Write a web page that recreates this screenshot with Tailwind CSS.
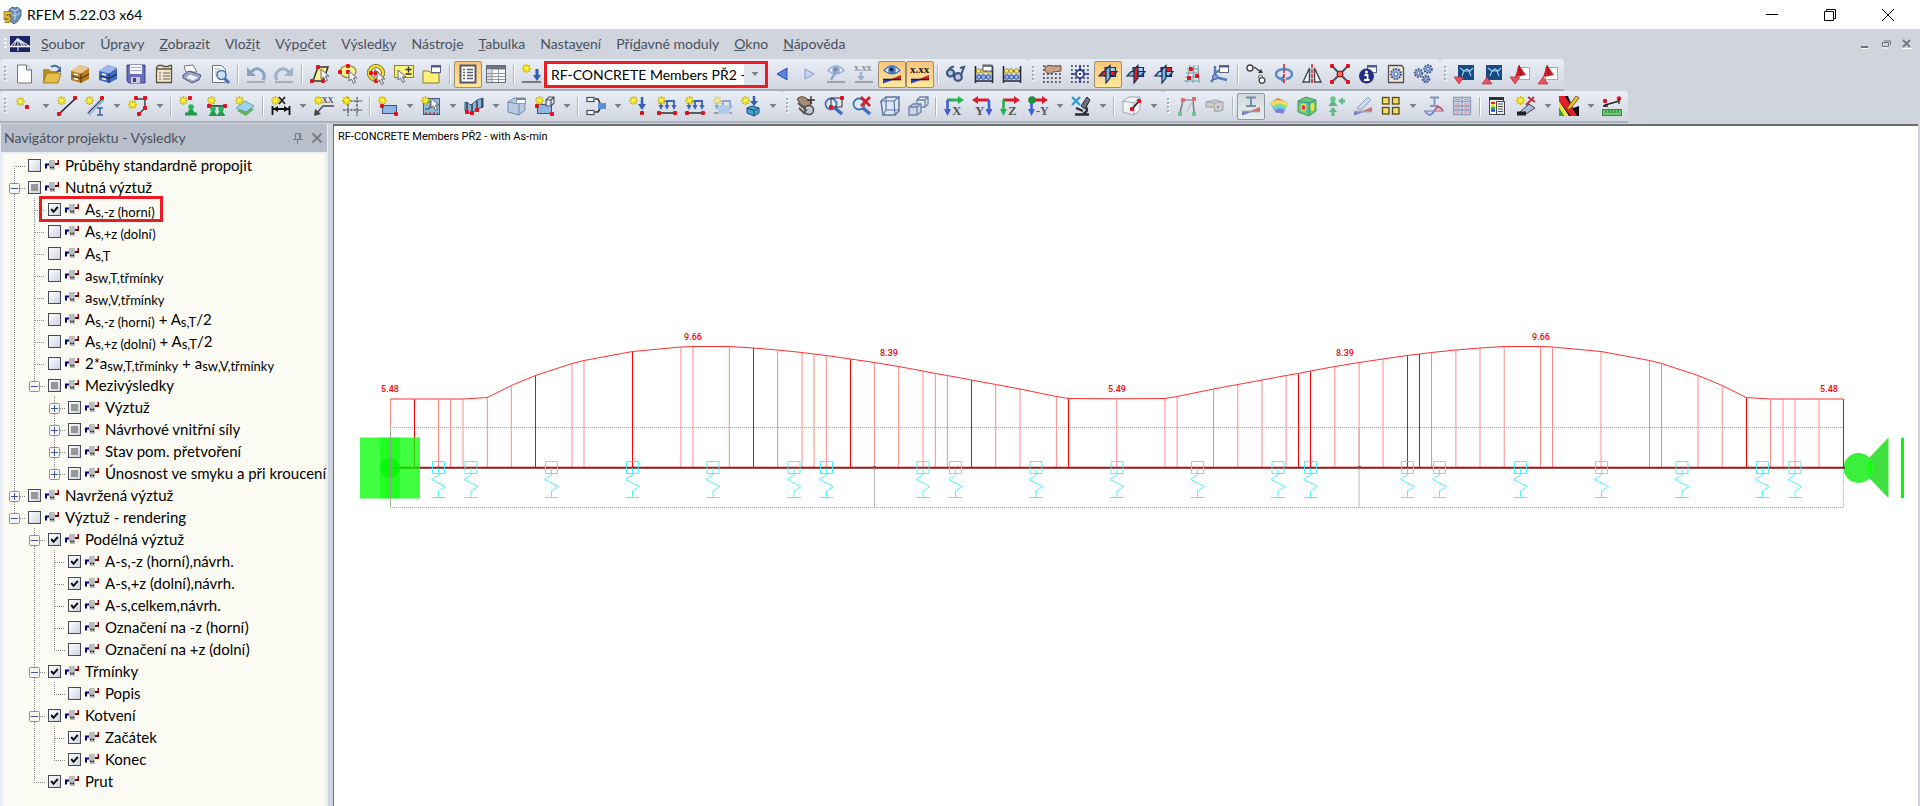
<!DOCTYPE html>
<html lang="cs">

<head>
    <meta charset="UTF-8">
    <meta name="viewport" content="width=device-width, initial-scale=1.0">
    <title>RFEM 5.22.03 x64</title>
    <script src="https://cdn.jsdelivr.net/npm/@tailwindcss/browser@4"></script>
</head>

<body class="flex h-screen flex-col overflow-hidden bg-[#d0d4dd] font-[Lato,sans-serif]">
    <!-- Title bar -->
    <header class="flex h-[29px] shrink-0 items-center bg-white pr-[3px] pl-[3px]">
        <svg class="h-5 w-5" viewBox="0 0 20 20">
            <path d="M6 5l3-3 3 1 2-1 4 3v6l-3 5-4 3-4-3z" fill="#6d8fb5" stroke="#31557f" stroke-width=".8" />
            <path d="M8 4l4 2 4-2M12 6v9M8 9l4 2 5-3" fill="none" stroke="#c2d6ea" stroke-width="1" />
            <path d="M8.500 8H2.500v4.500c3-1.200 4.500 0 4 2-.5 2-2.500 2-4.500 1.500" fill="none" stroke="#7a5c10" stroke-width="3.600" />
            <path d="M8.500 8H2.500v4.500c3-1.200 4.500 0 4 2-.5 2-2.500 2-4.500 1.500" fill="none" stroke="#e8b93c" stroke-width="2.200" />
        </svg>
        <h1 class="ml-1 flex-1 text-[14px] leading-5">RFEM 5.22.03 x64</h1>
        <button class="flex h-7 w-[58px] items-center justify-center" aria-label="Minimalizovat">
            <svg class="h-3 w-3" viewBox="0 0 12 12"><path d="M0 5.500h12" stroke="#000" /></svg>
        </button>
        <button class="flex h-7 w-[58px] items-center justify-center" aria-label="Obnovit">
            <svg class="h-3 w-3" viewBox="0 0 12 12"><path d="M.5 2.500h9v9h-9zM2.500 2.500v-2h9v9h-2" fill="none" stroke="#000" /></svg>
        </button>
        <button class="flex h-7 w-[58px] items-center justify-center" aria-label="Zavřít">
            <svg class="h-3 w-3" viewBox="0 0 12 12"><path d="M0 0l12 12M12 0L0 12" stroke="#000" /></svg>
        </button>
    </header>

    <!-- Menu bar -->
    <nav class="flex h-[30px] shrink-0 items-center pr-[3px] pl-1 text-[14px] leading-5 text-[#49515e]">
        <svg class="mr-[3px] h-4 w-[3px]" viewBox="0 0 3 16"><path d="M1.500 2v12" stroke="#fff" stroke-width="2" stroke-dasharray="2 2" /></svg>
        <svg class="mr-[11px] h-4 w-5" viewBox="0 0 20 16">
            <rect width="20" height="16" fill="#1d2463" />
            <path d="M0 10.500h20" stroke="#fff" stroke-width="1.500" />
            <path d="M8 2v13M8 2L1 10M8 2L4 10M8 3l11 7M8 3l7 7M8 3l4 7" fill="none" stroke="#dfe4f4" stroke-width="1.100" />
        </svg>
        <div class="flex flex-1 gap-[15px]">
            <button><u>S</u>oubor</button>
            <button>Úpr<u>a</u>vy</button>
            <button><u>Z</u>obrazit</button>
            <button>Vlož<u>i</u>t</button>
            <button>Výp<u>o</u>čet</button>
            <button>Výsled<u>k</u>y</button>
            <button>Nástro<u>j</u>e</button>
            <button><u>T</u>abulka</button>
            <button>Nasta<u>v</u>ení</button>
            <button>Pří<u>d</u>avné moduly</button>
            <button><u>O</u>kno</button>
            <button><u>N</u>ápověda</button>
        </div>
        <button class="flex h-5 w-[21px] items-center justify-center" aria-label="Minimalizovat okno">
            <svg class="h-3 w-3" viewBox="0 0 12 12"><path d="M2 10.500h7" stroke="#fff" /><path d="M2 9h7" stroke="#6b6f76" stroke-width="2" /></svg>
        </button>
        <button class="flex h-5 w-[21px] items-center justify-center" aria-label="Obnovit okno">
            <svg class="h-3 w-3" viewBox="0 0 12 12"><path d="M2.500 4.500h6v4h-6zM4 3h6.500v4" fill="none" stroke="#73777e" /><path d="M2 10h7" stroke="#fff" /></svg>
        </button>
        <button class="flex h-5 w-[21px] items-center justify-center" aria-label="Zavřít okno">
            <svg class="h-3 w-3" viewBox="0 0 12 12"><path d="M1.500 10.500h9" stroke="#fff" /><path d="M2 2l7 7M9 2L2 9" stroke="#73777e" stroke-width="1.800" /></svg>
        </button>
    </nav>

    <!-- Toolbars, filled by the script -->
    <div id="toolbar1" class="flex h-8 shrink-0"></div>
    <div id="toolbar2" class="mb-px flex h-8 shrink-0"></div>

    <div class="flex min-h-0 flex-1">
        <!-- Results navigator -->
        <aside class="mr-[5px] flex w-[328px] shrink-0 flex-col border-x border-[#e9edf6] bg-[#b9bfca]">
            <div class="flex h-[28px] shrink-0 items-center gap-[7px] pr-1 pl-[3px] text-[#49515e]">
                <h2 class="flex-1 text-[14px] leading-5">Navigátor projektu - Výsledky</h2>
                <button aria-label="Připnout"><svg class="h-3 w-3" viewBox="0 0 12 12"><path d="M3.500 1v6M3 1.500h5M7.500 1v6M8.500 1v6M1 7.500h10M5.500 8v4" fill="none" stroke="#7b7f86" stroke-width="1.200" /></svg></button>
                <button aria-label="Zavřít panel"><svg class="h-3 w-3" viewBox="0 0 12 12"><path d="M1.500 1.500l9 9M10.500 1.500l-9 9" stroke="#7b7f86" stroke-width="2" /></svg></button>
            </div>
            <div class="min-h-0 flex-1 border-2 border-b-0 border-[#e9edf6] bg-[#fcfbf3]">
                <ul id="tree"></ul>
            </div>
        </aside>

        <!-- Work window -->
        <main class="mr-0.5 min-w-0 flex-1 overflow-hidden border-t-2 border-l border-[#6a6d72] bg-white">
            <p class="h-[23px] pl-1 font-[Roboto,sans-serif] text-[11px] leading-[22px]">RF-CONCRETE Members PŘ2 - with As-min</p>
            <svg id="diagram" class="block w-full" viewBox="334 150 1584 656" font-family="Roboto, sans-serif" font-size="9" font-weight="500"></svg>
        </main>
    </div>

    <script>
        // ---------- icon pieces ----------
        const star = (x = 0, y = 0) => `<g transform="translate(${x} ${y})"><path d="M4.500 0v9M0 4.500h9M1.300 1.300l6.400 6.400M7.700 1.300L1.300 7.700" stroke="#cdb900" stroke-width="1.500"/><circle cx="4.500" cy="4.500" r="2.300" fill="#fff04a"/></g>`;
        const dot = (x, y, c = '#e0101c') => `<rect x="${x}" y="${y}" width="4" height="4" rx="1" fill="${c}"/>`;
        const cursor = (x, y) => `<path transform="translate(${x} ${y})" d="M0 0v10l2.500-2 2 4.500 2-1-2-4.500H8z" fill="#eef0f4" stroke="#5a5e66" stroke-width=".9"/>`;
        const magnifier = `<circle cx="7" cy="8" r="5.500" fill="#dbeaf8" stroke="#456fb0" stroke-width="1.800"/><path d="M11 12l7 6" stroke="#3f6dbb" stroke-width="3.500"/>`;
        const miniWin = `<rect x="9.500" y="1.500" width="9" height="7" fill="#fff" stroke="#5d6680"/><path d="M9 2.500h10" stroke="#525c80" stroke-width="2"/>`;
        const cabinet = (a, b, c) => `<path d="M1 7l9-6 9 3v11l-8 4-10-3z" fill="${a}"/><path d="M1 7l10 2.500L19 4l-9-3z" fill="${b}"/><path d="M11 9.500V19M1.500 12l9.500 2.500L19 10" fill="none" stroke="${c}" stroke-width="1.200"/><path d="M4 10l4 1M4 14.500l4 1" stroke="#fff" stroke-width="1.500"/>`;
        const diagramFlag = (c = '#20242c') => `<path d="M8 15.500L19 11v4.500z" fill="#d3232b"/><path d="M1 15.500h11L1 19.500z" fill="#2c44d8"/><path d="M1 15.500h18" stroke="${c}" stroke-width="1.600"/>`;
        const eye = c => `<path d="M2 6.500Q10 -2.500 18 6.500Q10 13 2 6.500z" fill="#f6f8ff" stroke="${c}" stroke-width="1.300"/><circle cx="10" cy="6" r="3.800" fill="${c}"/><circle cx="9.500" cy="5.500" r="1.600" fill="#111"/>`;
        const text = (x, y, t, s, c) => `<text x="${x}" y="${y}" font-family="Liberation Serif, serif" font-weight="bold" font-size="${s}" fill="${c}">${t}</text>`;
        const gridDots = `<path d="M1 2h18M1 6h18M1 10h18M1 14h18M1 18h18" stroke="#5b6068" stroke-width="1.800" stroke-dasharray="1.800 2.200"/>`;
        const abacus = `<path d="M1.500 2v17M18.500 2v17M1 17h18M1 7h18" stroke="#222a38" stroke-width="1.600"/><g fill="#f5df66" stroke="#8b7720" stroke-width=".7"><circle cx="4.500" cy="7" r="2.300"/><circle cx="9" cy="7" r="2.300"/><circle cx="14.500" cy="7" r="2.300"/></g><g fill="#8fb0ea" stroke="#28458a" stroke-width=".9"><circle cx="5" cy="13" r="2.300"/><circle cx="9.500" cy="13" r="2.300"/><circle cx="14.500" cy="13" r="2.300"/></g>`;
        // three crossing work planes: back square, flat plane, upright plane
        const planes = (square, flat, upright) => `<path d="M7 3.500h10.500v9H7z" fill="${square}" stroke="#153050" stroke-width="1.200"/><path d="M1 12l4-4.500h14L15 12z" fill="${flat}" stroke="#153050" stroke-width="1.200"/><path d="M8 5.500l4-4V14l-4 5z" fill="${upright}" stroke="#153050" stroke-width="1.200"/><path d="M12 8v4h6" fill="none" stroke="#153050"/>`;
        const gear = (x, y, r) => `<circle cx="${x}" cy="${y}" r="${r}" fill="#9db7e2" stroke="#3b568f" stroke-width="2" stroke-dasharray="1.700 1.100"/><circle cx="${x}" cy="${y}" r="${r / 2.500}" fill="#eef3fb" stroke="#3b568f" stroke-width=".8"/>`;
        const axes = (c1, c2, left, letter, size = 13) => left
            ? `<path d="M6 4h11" stroke="${c1}" stroke-width="3"/><path d="M0 4l6-4v8z" fill="${c1}"/><path d="M17 4v10" stroke="${c2}" stroke-width="2.600"/><path d="M13.500 13h7L17 20z" fill="${c2}"/>` + text(3, 19, letter, size, '#525760')
            : `<path d="M3 4h11" stroke="${c1}" stroke-width="3"/><path d="M20 4l-6-4v8z" fill="${c1}"/><path d="M3.500 4v10" stroke="${c2}" stroke-width="2.600"/><path d="M0 13h7l-3.500 7z" fill="${c2}"/>` + text(8, 19, letter, size, '#525760');
        const loads = `<path d="M4 5h14M4 5v7M10 5v7M17 5v7" fill="none" stroke="#3966b5" stroke-width="1.800"/><path d="M1.500 9h5L4 14zM7.500 9h5l-2.500 5zM14.500 9h5L17 14z" fill="#3966b5"/><path d="M1 17h18" stroke="#333" stroke-width="1.500"/>`;
        const cone = (x, y) => `<path d="M${x} ${y}l4.500 7h-9z" fill="#1f9b4b"/><circle cx="${x}" cy="${y}" r="2.800" fill="#2db55d"/>`;
        const screen = `<rect x="4" y="1" width="16" height="15" fill="#164a80"/><path d="M6 4l4 3 3-2 3 2 3-3M8 12l2-5M17 12l-2-5M10 7h5" fill="none" stroke="#a8d0f5" stroke-width="1.100"/>`;
        const pdf = `<rect x="7.500" y="3.500" width="12" height="12" fill="#fafbfd" stroke="#a5a9b2"/><path d="M5 13L9 1l7 10-5 1z" fill="#d21a24"/><path d="M9 1l2 10" stroke="#8e0f18"/>`;
        const down = `<path d="M0 13h10l-5 7z" fill="#f0505a" stroke="#a81c26" stroke-width=".6"/>`;
        const up = `<path d="M0 20h10l-5-7z" fill="#f0505a" stroke="#a81c26" stroke-width=".6"/>`;

        // ---------- first toolbar: [name, drawing, look] or a keyword ----------
        const toolbar1 = [
            [
                ['Nový', '<path d="M3.500 1h9l5 5v13h-14z" fill="#fdfdfe" stroke="#70747c"/><path d="M12.500 1v5h5" fill="#e4e7ee" stroke="#70747c"/>'],
                ['Otevřít', '<path d="M1 5h6l2 2h7v12H1z" fill="#b98f1d"/><path d="M1 19L5 9h14l-3 10z" fill="#e3be48" stroke="#94700f" stroke-width=".8"/><path d="M9 3q5-3 8 1" fill="none" stroke="#3d6da8" stroke-width="2"/><path d="M19 2v6h-5z" fill="#3d6da8"/>'],
                ['Archiv', cabinet('#b87c22', '#eac88a', '#5b3c0c')],
                ['Projekty', cabinet('#3f6cb8', '#9ab8ee', '#1b2f63')],
                ['Uložit', '<path d="M1 1h18v18H3l-2-2z" fill="#6b6db8" stroke="#43457f"/><rect x="4" y="1" width="12" height="9" fill="#f4f5fa"/><path d="M5 3.500h10M5 6.500h10" stroke="#a9acc6"/><rect x="5" y="13" width="9" height="6" fill="#c9cbdc"/><rect x="7" y="14" width="3" height="4" fill="#3e4078"/>'],
                ['Protokol', '<path d="M2.500 3.500l2-2h4l1 1h5l1-1h2v17h-15z" fill="#f1e7cf" stroke="#5c5240" stroke-width="1.300"/><path d="M3 5h15" stroke="#5c5240" stroke-width="1.500"/><path d="M5 9h2M9 9h7M5 12h2M9 12h7M5 15h2M9 15h7" stroke="#6a6250"/>'],
                ['Tisk', '<path d="M4 8L2 2l9-1 4 7z" fill="#fff" stroke="#74777f"/><path d="M1 11l6-4 12 4-2 5-7 3-9-5z" fill="#9aa2c6" stroke="#4a5072" stroke-width=".9"/><path d="M4 13.500l7 3 5-3-8-3z" fill="#eceff8"/>'],
                ['Náhled', '<path d="M2.500 1.500h9l4 4v13h-13z" fill="#fbfcfe" stroke="#70747c"/><path d="M5 5h5M5 8h4M5 11h3" stroke="#9aa0ab"/><circle cx="11.500" cy="11" r="4.500" fill="#cfe2f6" stroke="#456fb0" stroke-width="1.500"/><path d="M14.500 14.500l4.500 4.500" stroke="#3f6dbb" stroke-width="3"/>'],
                'sep',
                ['Zpět', '<path d="M5 8Q11 2 16 7q4 4 1 9" fill="none" stroke="#8ba1c3" stroke-width="3"/><path d="M1 3v9h9z" fill="#8ba1c3"/><path d="M1 18h18" stroke="#a8adb6" stroke-width="2"/>'],
                ['Znovu', '<path d="M15 8Q9 2 4 7q-4 4-1 9" fill="none" stroke="#9fb0ca" stroke-width="3"/><path d="M19 3v9h-9z" fill="#9fb0ca"/><path d="M1 18h18" stroke="#a8adb6" stroke-width="2"/>'],
                'sep',
                ['Výběr rovinou', '<path d="M3 17L8 3h10l-5 14z" fill="#fbf28e" stroke="#333" stroke-width="1.500"/>' + dot(0, 15) + dot(6, 1) + dot(11, 15) + cursor(11, 5)],
                ['Výběr elipsou', '<ellipse cx="10" cy="7.500" rx="8" ry="6" fill="#fbf28e" stroke="#8c8433" stroke-width="1.200"/>' + dot(0, 6) + dot(8, 0) + dot(8, 6) + cursor(11, 7)],
                ['Výběr prstencem', '<circle cx="10" cy="9" r="7" fill="#eef0f4" stroke="#5f5710" stroke-width="4"/><circle cx="10" cy="9" r="7" fill="none" stroke="#f2df2c" stroke-width="2.600"/><path d="M5 9h8M9 5v8" stroke="#d11"/>' + dot(3, 7) + dot(8, 7) + dot(8, 15) + cursor(11, 8)],
                ['Přidat k výběru', '<rect x=".5" y="1.500" width="19" height="12" fill="#fbf07a" stroke="#8f872c"/><path d="M14.500 2.500v6M11.500 5.500h6M11.500 10h6" stroke="#333" stroke-width="1.300"/>' + cursor(4, 6)],
                ['Nový výběr', '<path d="M1 7h6l2 2h8v10H1z" fill="#fbf07a" stroke="#8a7d20"/>' + miniWin],
                'sep',
                ['Navigátor', '<rect x="2.500" y="1.500" width="15" height="17" fill="#fff" stroke="#555b66" stroke-width="2"/><path d="M5 5.500h2M9 5.500h6M5 8.500h2M9 8.500h6M5 11.500h2M9 11.500h6M5 14.500h2M9 14.500h6" stroke="#555b66" stroke-width="1.400"/>', 'on'],
                ['Tabulka', '<rect x=".5" y="1.500" width="19" height="17" fill="#fff" stroke="#676d78"/><rect x="1" y="2" width="18" height="3.500" fill="#6d7584"/><rect x="1" y="5.500" width="5" height="12.500" fill="#dadde3"/><path d="M1 9.500h18M1 12.500h18M1 15.500h18M6 5v13M12.500 5v13" stroke="#8f959f"/>'],
                'sep',
                ['Nový zatěžovací stav', star(0, 0) + '<path d="M15 5v7" stroke="#2f5fb8" stroke-width="3"/><path d="M11 11h8l-4 6z" fill="#2f5fb8"/><path d="M0 18h19" stroke="#777b83" stroke-width="2"/>'],
                'combo',
                ['Předchozí', '<path d="M15 4v12L5 10z" fill="#5b82dc" stroke="#2a4eae"/>', 'narrow'],
                ['Další', '<path d="M6 5v10l9-5z" fill="#c9d7f5" stroke="#829ad0"/>', 'narrow'],
                ['Zobrazit zatížení', '<g opacity=".5">' + eye('#4a70b8') + '<path d="M9 9l-4 7" stroke="#4a70b8" stroke-width="2.500"/></g><path d="M1 18h18" stroke="#9da3ad" stroke-width="2"/>'],
                ['Hodnoty zatížení', text(0, 7, 'x.xx', 10, '#9197a1') + '<path d="M7 8v5" stroke="#9db0d6" stroke-width="2.500"/><path d="M3 12h8l-4 5z" fill="#9db0d6"/><path d="M1 18h18" stroke="#9da3ad" stroke-width="2"/>'],
                ['Zobrazit výsledky', eye('#3d77c4') + diagramFlag(), 'on'],
                ['Hodnoty výsledků', text(0, 9, 'x.xx', 11, '#222') + diagramFlag(), 'on'],
                'sep',
                ['Brýle', '<circle cx="4.500" cy="9" r="3.500" fill="#b6c8e4" stroke="#3c557f" stroke-width="2.200"/><circle cx="12" cy="13" r="3.800" fill="#b6c8e4" stroke="#3c557f" stroke-width="2.200"/><path d="M3 6q2-4 5-3M15 11l3-8-4 1" fill="none" stroke="#3c557f" stroke-width="2"/>'],
                ['Vypočítat', abacus + '<rect x="9" y="1" width="9" height="6" fill="#fff" stroke="#555"/><path d="M9 2h9" stroke="#555" stroke-width="1.500"/>'],
                ['Vypočítat vše', abacus]
            ],
            [
                ['Pracovní rovina', gridDots + '<path d="M3 3q4-3 8-1h8v5l-8 1q-2 3-6 1-3-2-2-6z" fill="#c9a184" stroke="#6e5540"/>'],
                ['Rastr', gridDots + '<path d="M10 1v18M1 10h18" stroke="#2a3a96" stroke-width="1.600"/><circle cx="10" cy="10" r="4" fill="#eef2fc" stroke="#2a3a96" stroke-width="1.800"/><path d="M9 10h2" stroke="#2a3a96" stroke-width="2"/>'],
                ['Rovina XY', planes('#a5cdef', '#dc2229', '#82b4e4'), 'on'],
                ['Rovina YZ', planes('#a5cdef', '#82b4e4', '#dc2229')],
                ['Rovina XZ', planes('#ee1c24', '#a5cdef', '#82b4e4')],
                ['Stěna', '<path d="M6 1h10l1 18H1z" fill="#d4e8ee"/><path d="M5 5h11M4 9h13M3 13h14M2 17h15M8 1L5 19M12 1l-1 18M16 1l1 18" stroke="#7d99a8" stroke-width="1.100"/>' + dot(7, 3) + dot(13, 10) + dot(5, 12)],
                ['Osový systém', '<path d="M5 2v11l-4 5M5 13l12 3M5 9l5-3" fill="none" stroke="#5479b4" stroke-width="2.400"/><circle cx="5" cy="13" r="2.500" fill="#8aa8da" stroke="#3c5c98"/>' + miniWin],
                'sep',
                ['Kopírovat', '<circle cx="4" cy="4" r="3" fill="#fff" stroke="#444" stroke-width="1.400"/><circle cx="14.500" cy="13" r="2" fill="#fff" stroke="#555"/><circle cx="16" cy="16.500" r="2.800" fill="#fff" stroke="#444" stroke-width="1.300"/><path d="M8 3l7 5" stroke="#333" stroke-width="1.300"/><path d="M17 9l-5 0 3-4z" fill="#333"/>'],
                ['Otočit', '<path d="M8 15q-6-1-6-5t8-5q8 1 8 5t-6 5" fill="none" stroke="#5e8cc8" stroke-width="2.600"/><path d="M10 11v8l-5-4z" fill="#5e8cc8"/><path d="M10 0v20" stroke="#e01820" stroke-width="1.500" stroke-dasharray="4 1"/>'],
                ['Zrcadlit', '<path d="M7.500 4v14H1zM12.500 4v14H19z" fill="#f1f2f5" stroke="#444b57" stroke-width="1.400"/><path d="M10 0v20" stroke="#e01820" stroke-width="1.500" stroke-dasharray="4 1"/>'],
                ['Rozdělit', '<path d="M3 3l14 14M17 3L3 17" stroke="#555" stroke-width="2.200"/>' + dot(0, 0) + dot(16, 0) + dot(0, 16) + dot(16, 16) + '<circle cx="10" cy="10" r="3" fill="#e66" stroke="#900"/>'],
                ['Informace', miniWin + '<circle cx="8.500" cy="12" r="7.500" fill="#252e86"/><circle cx="8.500" cy="8" r="1.500" fill="#fff"/><path d="M6.500 11h3v5h1.500M6 16h5.500" fill="none" stroke="#fff" stroke-width="1.800"/>'],
                ['Nastavení', '<path d="M2.500 1.500h13l2 2v15h-15z" fill="#f4e5cf" stroke="#4d5058" stroke-width="1.300"/>' + gear(10, 10, 5)],
                ['Možnosti', gear(4.5, 9, 3.800) + gear(14, 5, 3.800) + gear(12, 15, 3.300)]
            ],
            [
                ['Import', screen + down],
                ['Export', screen + up],
                ['PDF import', pdf + down],
                ['PDF export', pdf + up]
            ]
        ];

        // ---------- second toolbar ----------
        const toolbar2 = [
            [
                ['Uzel', star(2, 1) + dot(11, 9)], 'drop',
                ['Linie', star(0, 0) + '<path d="M3 17L18 3" stroke="#222" stroke-width="1.600"/>' + dot(0, 16) + dot(16, 0)],
                ['Prut', '<path d="M3 18L18 3" stroke="#8fb3dc" stroke-width="4"/><path d="M3 17L18 2" stroke="#333"/>' + star(0, 0) + dot(15, 0) + '<path d="M12 12h6M15 12v7M12 19h6" stroke="#3c62a8" stroke-width="1.500"/>'], 'drop',
                ['Plocha', '<path d="M8 3h9v9l-6 6" fill="none" stroke="#444" stroke-width="1.500"/>' + star(0, 4) + dot(6, 0) + dot(15, 0) + dot(15, 10) + dot(9, 16)], 'drop', 'sep',
                ['Podpora uzlu', cone(12, 11) + star(0, 0) + dot(9, 0) + '<path d="M6 18h12" stroke="#1f9b4b" stroke-width="3"/>'],
                ['Podpora linie', star(0, 0) + '<path d="M3 10h14" stroke="#333" stroke-width="1.600"/>' + dot(0, 8) + dot(16, 8) + cone(6, 13) + cone(14, 13)],
                ['Podpora plochy', '<path d="M2 15l8-6 9 4-8 7z" fill="#5fb35f"/><path d="M1 12l9-7 9 5-8 6z" fill="#9ed3e8" stroke="#4a89a8" stroke-width=".7"/>' + star(0, 0)], 'sep',
                ['Kóta', '<path d="M1.500 10v9M18.500 10v9M2 13h16" stroke="#111" stroke-width="1.800"/><path d="M2 13l5-3v6zM18 13l-5-3v6z" fill="#111"/>' + star(0, 0) + '<path d="M8 1l6 7M14 1L8 8" stroke="#222" stroke-width="1.700"/>'], 'drop',
                ['Komentář', text(8, 7, 'XX', 8, '#555') + '<path d="M2 18L9 10h11" fill="none" stroke="#444" stroke-width="1.400"/><path d="M0 20l1-7 6 5z" fill="#444"/>' + star(0, 0)],
                ['Vodicí linie', '<path d="M6 1v19M15 1v19M1 5h19M1 14h19" stroke="#5b5f66" stroke-width="1.400" stroke-dasharray="2.500 1"/>' + star(0, 0)], 'sep',
                ['Zatížení uzlu', '<rect x="4.500" y="9.500" width="14" height="8" fill="#8db6e4" stroke="#3c5580"/>' + star(0, 0) + dot(2, 8) + dot(16, 16)], 'drop',
                ['Zatížení linie', '<rect x="2.500" y="2.500" width="16" height="16" fill="#8db6d8" stroke="#3c5f88"/><path d="M4 13h4l2-5M5 6h6" fill="none" stroke="#35506e"/><path d="M4 17.500h13" stroke="#d22" stroke-width="2" stroke-dasharray="2 2"/>' + cursor(10, 2) + star(0, 0)], 'drop',
                ['Zatížení plochy', '<path d="M1 6l6 3 6-5 6-2v9l-6 2-6 5-6-3z" fill="#86b4dd" stroke="#2f5a8c"/><path d="M3 6v10M8 8v10M13 5v10M18 3v9" stroke="#333" stroke-width="1.400"/>' + dot(1, 14) + dot(6, 15) + dot(11, 12)], 'drop',
                ['Těleso', '<path d="M1 6l6-4h11v12l-6 5-11-3z" fill="#b9cbe2" stroke="#7289ab"/><path d="M1 6l11 2v11M12 8l6-4" fill="none" stroke="#7289ab"/><path d="M9.500 2.500h9v5h-9z" fill="#fff" stroke="#8f98ad"/><path d="M9 3h10" stroke="#7c88a8" stroke-width="2"/>'],
                ['Otvor', '<rect x="2.500" y="8.500" width="14" height="9" fill="#8db6e4" stroke="#3c5580"/><path d="M11 4l3-3h5v6l-3 3h-5zM11 4h5v6M16 4l3-3" fill="#e5eaf1" stroke="#4b5362" stroke-width="1.200"/>' + star(0, 0) + dot(0, 8) + dot(15, 16)], 'drop', 'sep',
                ['Generovat', '<rect x="1" y="1.500" width="7" height="4" fill="#fff" stroke="#555" stroke-width="1.300"/><rect x="1" y="14.500" width="7" height="4" fill="#fff" stroke="#555" stroke-width="1.300"/><path d="M9 3h3l2 4M9 16h3l2-3" fill="none" stroke="#333" stroke-width="1.600"/><rect x="12" y="7" width="8" height="6" fill="#5c8fd8"/>'], 'drop',
                ['Zatížení 1', star(0, 0) + '<path d="M13 1v9" stroke="#2f5fb8" stroke-width="2.500"/><path d="M9 8h8l-4 6z" fill="#2f5fb8"/>' + dot(11, 15)],
                ['Zatížení 2', loads + star(0, 0) + dot(0, 15) + dot(16, 15)],
                ['Zatížení 3', loads + star(0, 0) + dot(0, 15) + dot(16, 15)],
                ['Zatížení 4', '<g opacity=".5">' + loads + star(0, 0) + '<rect x="5" y="9" width="12" height="9" fill="#8db6e4"/></g>'],
                ['Zatížení 5', star(0, 0) + '<path d="M13 0v6" stroke="#2f5fb8" stroke-width="2.500"/><path d="M9 5h8l-4 5z" fill="#2f5fb8"/><path d="M6 12l5-2 7 2v5l-5 3-7-3z" fill="#4aa0d0" stroke="#1c4f70"/><path d="M6 12l7 2.500V20M13 14.500l5-2.500" fill="none" stroke="#1c4f70"/>'], 'drop'
            ],
            [
                ['Posun', '<path d="M1 3q4-4 9-1l6 5-4 5-7-3z" fill="#a88b74" stroke="#50402f"/><path d="M15 0v8M11 4h8" stroke="#333" stroke-width="1.300"/><circle cx="13" cy="14" r="4.500" fill="#c6c9cf" stroke="#444" stroke-width="1.500"/><path d="M2 7l9 8M3 12l6 6" stroke="#555" stroke-width="1.800"/>'],
                ['Zvětšit okno', magnifier + '<path d="M7 2h11v9H7z" fill="none" stroke="#333"/>' + dot(16, 0) + dot(5, 9)],
                ['Zrušit lupu', magnifier + '<path d="M9 1l9 9M18 1L9 10" stroke="#d81e26" stroke-width="2.800"/>'],
                ['Drátový model', '<path d="M1 5l5-4h13v14l-4 4H3z" fill="#dde7f5" stroke="#5f76a6" stroke-width="1.500"/><path d="M1 5h13l1 14M14 5l5-4M6 1v13h13M6 14l-3 5" fill="none" stroke="#5f76a6" stroke-width="1.200"/>'],
                ['Průhledný model', '<path d="M9 4l3-3h8v7l-3 3h-8z" fill="#e3e9f3" stroke="#7081a5" stroke-width="1.300"/><path d="M9 4h8v7M17 4l3-3" fill="none" stroke="#7081a5" stroke-width="1.300"/><path d="M1 11l4-3h8v8l-4 3H1z" fill="#c9d5e8" stroke="#7081a5" stroke-width="1.300"/><path d="M1 11h8v8M9 11l4-3" fill="none" stroke="#7081a5" stroke-width="1.300"/>'], 'sep',
                ['Pohled X', axes('#27b34d', '#3a62d8', false, 'X')],
                ['Pohled Y', axes('#d81e2c', '#3a62d8', true, 'Y')],
                ['Pohled Z', axes('#d81e2c', '#27b34d', false, 'Z')],
                ['Pohled -Y', axes('#d81e2c', '#3a62d8', false, '-Y', 12) + '<circle cx="4" cy="4" r="3.800" fill="#1e8f3a"/>'], 'drop',
                ['Vizualizace', '<path d="M1 1l8 8M9 1L1 9" stroke="#2a9bd8" stroke-width="2.200"/><path d="M16 1l-6 9 4 3 5-9z" fill="#6b727e" stroke="#22262d"/><path d="M15 11q3 4-3 7M4 18.500h14M5 12l7 3" fill="none" stroke="#2a2e36" stroke-width="2.400"/>'], 'drop', 'sep',
                ['Řez', '<path d="M1 5l6-4h11v13l-6 5-11-3z" fill="#f0f2f6" stroke="#a3a7af"/><path d="M1 5l11 2v12M12 7l6-6" fill="none" stroke="#a3a7af"/><path d="M10 13l7-8" stroke="#222" stroke-width="1.800"/>' + dot(15, 3) + dot(8, 11)], 'drop'
            ],
            [
                ['Výsledky prutů', '<g opacity=".6"><path d="M3 17L6 4h10l1 13" fill="none" stroke="#444" stroke-width="1.600"/><path d="M6 5l11-2-7 12" fill="none" stroke="#999"/>' + dot(4, 2) + dot(15, 1) + dot(1, 16, '#27b34d') + dot(15, 16, '#27b34d') + '</g>'],
                ['Průřez', '<g opacity=".65"><path d="M1 6l9-2 8 2v8l-8 2-1-5H1z" fill="#c4c6ca" stroke="#777"/><path d="M1 6l8 1v4M9 7l9-1" fill="none" stroke="#888"/><path d="M9 11h2" stroke="#f2c230" stroke-width="2"/><path d="M12 11h2" stroke="#d33" stroke-width="2"/></g>'], 'sep',
                ['Vnitřní síly', '<g opacity=".65"><path d="M5 1.500h10M10 1v9M5 10h10" stroke="#3d5f96" stroke-width="2"/>' + diagramFlag('#777') + '</g>', 'pressed'],
                ['Izoplochy', '<g opacity=".85"><path d="M1 7l8-5 10 5-5 11q-4-2-7-1z" fill="#6a6fe0"/><path d="M1 7l8-5 10 5-3 7q-5-3-10 0z" fill="#54cde0"/><path d="M1 7l8-5 10 5-2 5q-6-4-12 0z" fill="#86dc6a"/><path d="M1 7l8-5 10 5-1 3q-8-5-14 0z" fill="#f5e04c"/><path d="M4 5l5-3 8 4q-7-3-13-1z" fill="#ee6a50"/></g>'],
                ['Izoplochy těles', '<path d="M1 5l8-4 10 3v11l-7 5-11-4z" fill="#62c878" stroke="#4a9a5c"/><path d="M1 5l11 2 7-3M12 7v13" fill="none" stroke="#3f8a9a"/><ellipse cx="6.500" cy="11.500" rx="4" ry="5" fill="#5ac0e0"/><ellipse cx="6.500" cy="11.500" rx="3" ry="4" fill="#f2e23c"/><ellipse cx="6.500" cy="11.500" rx="1.800" ry="2.600" fill="#e33b32"/><ellipse cx="15.500" cy="11" rx="2" ry="4" fill="#f2e23c"/>'],
                ['Reakce', '<g opacity=".65">' + cone(8, 3) + '<path d="M8 20v-5M17 5h3" stroke="#27a550" stroke-width="3"/><path d="M4 16l4-5 4 5zM18 1v8l-5-4z" fill="#27a550"/></g>'],
                ['Napětí', '<g opacity=".6"><path d="M4 12L15 1l3 3L8 14z" fill="#b9d3ec" stroke="#55729b"/>' + diagramFlag('#777') + '</g>'],
                ['Okna', '<g fill="#f5dc68" stroke="#5a4c18" stroke-width="1.300"><rect x="1.500" y="1.500" width="6.500" height="6.500"/><rect x="11.500" y="1.500" width="6.500" height="6.500"/><rect x="1.500" y="11.500" width="6.500" height="6.500"/><rect x="11.500" y="11.500" width="6.500" height="6.500"/></g>'], 'drop',
                ['Průběhy', '<path d="M6 1.500h9M10.500 1v9M6 10h9" stroke="#8193ba" stroke-width="1.800"/><path d="M10 15q5-8 9 0" fill="#f0c0c4" stroke="#d8404a" stroke-width="1.300"/><path d="M1 15q5 8 9 0" fill="#c8d2ee" stroke="#5a70c0" stroke-width="1.300"/><path d="M0 15h20" stroke="#6f83b8"/>'],
                ['Tabulka výsledků', '<path d="M1 1.500h18M1 5.500h18M1 10h18M1 14h18M1 18.500h18M1.500 1v17M10 1v17M18.500 1v17" stroke="#8f9cc2" stroke-width="1.300"/><path d="M3 3.500h5M12 3.500h5M3 8h5M12 8h5M3 12h5M12 12h5M3 16h5M12 16h5" stroke="#e0808c"/>'], 'sep',
                ['Panel', '<rect x="1.500" y="1.500" width="14" height="17" fill="#fff" stroke="#444"/><path d="M1 2.500h15" stroke="#333" stroke-width="3"/><path d="M3 7h4" stroke="#e22" stroke-width="2.500"/><path d="M3 9.500h4" stroke="#ee2" stroke-width="2.500"/><path d="M3 12h4" stroke="#2b4" stroke-width="2.500"/><path d="M3 14.500h4" stroke="#24d" stroke-width="2.500"/><rect x="8.500" y="5.500" width="8" height="13" fill="#e9edf4" stroke="#444"/><path d="M10 8h5M10 10.500h5M10 13h5M10 15.500h5" stroke="#555"/>'],
                ['Barvy', '<path d="M10 9L18 1M12 1l7 5" stroke="#c0303a" stroke-width="2"/><path d="M4 16l9-8 6 4-9 6z" fill="#a9bdd8" stroke="#444"/><path d="M1 17.500h9" stroke="#1d2128" stroke-width="4"/>' + star(0, 0)], 'drop',
                ['Barevná stupnice', '<rect width="20" height="20" fill="#111"/><path d="M0 0h6l12 20h-6L0 5z" fill="#e21f26"/><path d="M0 5l10 15H5L0 12z" fill="#f3e634"/><path d="M0 12l5 8H0z" fill="#22a83c"/><path d="M9 0h11v10l-6 2z" fill="#dfe6f2"/><path d="M9 11l8-11 3 2-8 10-4 2z" fill="#f3c630" stroke="#7a5a10"/>'], 'drop',
                ['Měřítko', '<path d="M3 11V9l14-4" fill="none" stroke="#222" stroke-width="1.600"/><circle cx="3" cy="5" r="2.200" fill="#e0101c"/><circle cx="17" cy="2.500" r="2.200" fill="#e0101c"/><path d="M1 10h5M17 3v5" stroke="#222" stroke-width="1.300"/><rect x=".5" y="13.500" width="19" height="6" fill="#6fcb72" stroke="#338a3a"/><path d="M4 14v3M7 14v3M10 14v3M13 14v3M16 14v3" stroke="#1f6d28"/>']
            ]
        ];

        const arrow = '<svg class="h-2 w-2" viewBox="0 0 8 8"><path d="M.5 2h7L4 6z" fill="#7a7f88"/></svg>';
        const states = {
            on: 'flex h-[27px] w-7 items-center justify-center rounded-xs border border-[#9a8f72] bg-linear-to-b from-[#fbc47c] to-[#fde79b]',
            pressed: 'flex h-[27px] w-7 items-center justify-center rounded-xs border border-[#8f9aa0] bg-linear-to-b from-[#d3dbdb] to-[#e8efef]',
            narrow: 'flex h-7 w-[27px] items-center justify-center',
            plain: 'flex h-7 w-7 items-center justify-center'
        };

        function renderItem(item) {
            if (item === 'sep') return '<span class="mx-[3px] h-[19px] w-0.5 border-l border-[#aeb4bf] bg-white"></span>';
            if (item === 'drop') return `<button class="flex h-7 w-[15px] items-center justify-center" aria-label="Více">${arrow}</button>`;
            if (item === 'combo') return `
                <div class="relative -ml-0.5 h-[27px] w-56 border-[3px] border-[#ed1c24] bg-white">
                    <select aria-label="Zatěžovací stav" class="block h-[21px] w-full appearance-none p-0 pl-1 text-[14px] leading-[21px] outline-none">
                        <option>RF-CONCRETE Members PŘ2 -</option>
                    </select>
                    <span class="pointer-events-none absolute inset-y-0 right-0 flex w-[21px] items-center justify-center bg-[#dfe4ec]">${arrow}</span>
                </div>`;
            return `<button class="${states[item[2] || 'plain']}" aria-label="${item[0]}"><svg class="h-5 w-5 shrink-0 overflow-visible" viewBox="0 0 20 20">${item[1]}</svg></button>`;
        }

        function renderToolbar(id, groups) {
            document.getElementById(id).innerHTML = groups.map(items => `
                <div class="flex items-center rounded-t-sm border-b-2 border-[#aab0ba] bg-linear-to-b from-[#e9eef7] to-[#d1d6e0] pr-0.5">
                    <svg class="mr-[3px] ml-1 h-4 w-[3px]" viewBox="0 0 3 16"><path d="M2 1v15" stroke="#fff" stroke-width="2" stroke-dasharray="2 2"/><path d="M1 0v15" stroke="#a6acb7" stroke-width="2" stroke-dasharray="2 2"/></svg>
                    ${items.map(renderItem).join('')}
                </div>`).join('');
        }

        renderToolbar('toolbar1', toolbar1);
        renderToolbar('toolbar2', toolbar2);

        // ---------- tree ----------
        // guides: | line, t branch, l last branch, f first branch, +/- expander, p/m expander on the last branch
        const sub = t => `<sub class="bottom-0 align-[-2px] text-[13px] leading-none">${t}</sub>`;
        const rows = [
            ['f', 0, 'Průběhy standardně propojit'],
            ['-', 2, 'Nutná výztuž'],
            ['|t', 1, 'A' + sub('s,-z (horní)'), true],
            ['|t', 0, 'A' + sub('s,+z (dolní)')],
            ['|t', 0, 'A' + sub('s,T')],
            ['|t', 0, 'a' + sub('sw,T,třmínky')],
            ['|t', 0, 'a' + sub('sw,V,třmínky')],
            ['|t', 0, 'A' + sub('s,-z (horní)') + ' + A' + sub('s,T') + '/2'],
            ['|t', 0, 'A' + sub('s,+z (dolní)') + ' + A' + sub('s,T') + '/2'],
            ['|t', 0, '2*a' + sub('sw,T,třmínky') + ' + a' + sub('sw,V,třmínky')],
            ['|m', 2, 'Mezivýsledky'],
            ['| +', 2, 'Výztuž'],
            ['| +', 2, 'Návrhové vnitřní síly'],
            ['| +', 2, 'Stav pom. přetvoření'],
            ['| p', 2, 'Únosnost ve smyku a při kroucení'],
            ['+', 2, 'Navržená výztuž'],
            ['m', 0, 'Výztuž - rendering'],
            [' -', 1, 'Podélná výztuž'],
            [' |t', 1, 'A-s,-z (horní),návrh.'],
            [' |t', 1, 'A-s,+z (dolní),návrh.'],
            [' |t', 1, 'A-s,celkem,návrh.'],
            [' |t', 0, 'Označení na -z (horní)'],
            [' |l', 0, 'Označení na +z (dolní)'],
            [' -', 1, 'Třmínky'],
            [' |l', 0, 'Popis'],
            [' -', 1, 'Kotvení'],
            [' |t', 1, 'Začátek'],
            [' |l', 1, 'Konec'],
            [' l', 1, 'Prut']
        ];

        const guidePaths = {
            '|': 'M10.500 0v22',
            't': 'M10.500 0v22M11 12.500h10',
            'l': 'M10.500 0v12M10 12.500h11',
            'f': 'M10.500 12v10M10 12.500h11',
            '+': 'M10.500 0v22M16 12.500h5',
            '-': 'M10.500 0v22M16 12.500h5',
            'p': 'M10.500 0v12M16 12.500h5',
            'm': 'M10.500 0v12M16 12.500h5'
        };

        function renderGuide(g) {
            if (g === ' ') return '<span class="w-5 shrink-0"></span>';
            const line = `<path d="${guidePaths[g]}" fill="none" stroke="#8a8a86" stroke-dasharray="1 1"/>`;
            if (!'+-pm'.includes(g)) return `<svg class="h-[22px] w-5 shrink-0 overflow-visible" viewBox="0 0 20 22">${line}</svg>`;
            const cross = '+p'.includes(g) ? 'M7 12.500h7M10.500 9v7' : 'M7 12.500h7';
            return `<button class="h-[22px] w-5 shrink-0" aria-label="${'+p'.includes(g) ? 'Rozbalit' : 'Sbalit'}"><svg class="h-[22px] w-5 overflow-visible" viewBox="0 0 20 22">${line}
                <rect x="5.500" y="7.500" width="10" height="10" rx="1" fill="#f6f6f4" stroke="#8f9196"/><path d="${cross}" stroke="#3b55a0"/></svg></button>`;
        }

        document.getElementById('tree').innerHTML = rows.map(([guides, state, label, marked], i) => `
            <li class="flex h-[22px] items-center pl-px">
                ${[...guides].map(renderGuide).join('')}
                <span class="relative ml-1 flex items-center">
                    <span class="relative block h-[13px] w-[13px] shrink-0">
                        <input type="checkbox" id="row${i}" ${state === 1 ? 'checked' : ''} data-mixed="${state === 2}"
                            class="peer block h-[13px] w-[13px] appearance-none border border-[#474c54] bg-linear-to-br from-white to-[#ccd3e0]">
                        <svg class="pointer-events-none absolute top-0 left-0 hidden h-[13px] w-[13px] peer-checked:block" viewBox="0 0 13 13"><path d="M3.200 6l2.300 2.800L9.800 4" fill="none" stroke="#111" stroke-width="2"/></svg>
                        <span class="pointer-events-none absolute inset-[3px] hidden bg-[#979797] peer-indeterminate:block"></span>
                    </span>
                    <svg class="ml-1 h-3 w-[15px] shrink-0" viewBox="0 0 15 12"><path d="M4 1h6v10H5V8H4z" fill="#bcbcbc"/><path d="M0 4.500h4v2H2v3H0z" fill="#00007c"/><path d="M14 1v5h-4V4h2.500V1z" fill="#7c0000"/><path d="M5 8.500h1.500M7.500 8.500H9" stroke="#111" stroke-width="1.500"/></svg>
                    <label for="row${i}" class="ml-[5px] text-[15px] leading-[22px] whitespace-nowrap">${label}</label>
                    ${marked ? '<span class="pointer-events-none absolute -top-0.5 -right-2 -bottom-0.5 -left-[9px] border-[3px] border-[#ed1c24]"></span>' : ''}
                </span>
            </li>`).join('');
        document.querySelectorAll('[data-mixed=true]').forEach(box => box.indeterminate = true);

        // ---------- reinforcement diagram ----------
        const base = 468.5, mid = 1116.75;
        // x, top of the ordinate; the right half mirrors the left one
        const half = [
            [390.5, 400], [414.5, 400], [438.5, 400], [450.5, 400], [463, 400], [487.300, 398.5], [511.300, 386.5],
            [535.5, 376.5], [572, 364.5], [584, 361.5], [632.5, 352.5], [681, 348], [693, 347.5], [729.300, 347.5],
            [753.5, 349], [777.600, 351], [802, 353.5], [814, 355], [826.300, 356.5], [850.5, 360], [874.400, 363.5],
            [898.700, 367.5], [923, 372], [935.300, 374.5], [947.400, 376.5], [971.5, 381], [995.700, 385.5],
            [1020, 390], [1056.400, 397.5], [1068.5, 399.5]
        ];
        const points = [...half, [mid, 399.8], ...half.map(([x, y]) => [2 * mid - x, y]).reverse()];
        const strong = [414.5, 535.5, 632.5, 753.5, 850.5, 971.5, 1068.5, 1298.5, 1310.5, 1407.5, 1419.5, 1746.5, 1843.5];
        const springs = [438.5, 471, 551.5, 632.5, 713, 794, 826.5, 923, 955.5, 1036, 1117, 1197.5, 1278, 1310.5, 1407.5, 1439.5, 1520.5, 1601.5, 1682, 1762.5, 1795];
        const values = [[390, 392.5, '5.48'], [693, 340.5, '9.66'], [889, 356.5, '8.39'], [1117, 392.5, '5.49'], [1345, 356.5, '8.39'], [1541, 340.5, '9.66'], [1829, 392.5, '5.48']];

        document.getElementById('diagram').innerHTML = `
            <path d="M390 428.500h1453M390 508.500h1453M1843.500 429v80" fill="none" stroke="#a8a8a8" stroke-dasharray="1 1"/>
            <path d="M390.500 429v80M874.500 429v80M1359 429v80" stroke="#b8b8b8"/>
            ${points.map(([x, y]) => {
                const near = strong.find(s => Math.abs(s - x) < 1);
                return `<path d="M${near || x} ${y}V${base}" stroke="${near ? '#ff0000' : '#ff8a8a'}"/>`;
            }).join('')}
            <polyline points="${points.map(p => p.join()).join(' ')}" fill="none" stroke="#ff3030"/>
            <path d="M390 469.500h1453" stroke="#907070"/>
            <path d="M390 468.500h1453" stroke="#d80000" stroke-width="1.500"/>
            <rect x="360" y="438.500" width="60" height="61" fill="#00ff00" fill-opacity=".75"/>
            <rect x="380" y="438.500" width="20" height="61" fill="#00ff00" fill-opacity=".5"/>
            <circle cx="390" cy="468.500" r="10" fill="#00f000" fill-opacity=".6"/>
            <path d="M390.500 429v80" stroke="#8c9c8c" stroke-dasharray="1 1"/>
            ${springs.map(x => `<path d="M${x - 6} 462.500h12v12h-12zM${x} 469v7l-7 4.500 14 7-7 4.500v6.500M${x - 7} 498.500h14" fill="none" stroke="#35f4f8" stroke-width=".9"/>`).join('')}
            <path d="M1869 459l19.500-20.500v60.500L1869 479z" fill="#40e040"/>
            <circle cx="1858.500" cy="469" r="15" fill="#3bf03b"/>
            <path d="M1870 459q5 10 0 20q-4-10 0-20z" fill="#12ff12"/>
            <circle cx="1843.500" cy="468.500" r="1.500" fill="#604040"/>
            <rect x="873" y="467" width="3" height="3" fill="#805050"/><rect x="1358" y="467" width="3" height="3" fill="#805050"/>
            <rect x="1901" y="439" width="3" height="60" fill="#00ff00"/>
            ${values.map(([x, y, t]) => `<text x="${x}" y="${y}" text-anchor="middle" fill="#ff0000">${t}</text>`).join('')}`;
    </script>
</body>

</html>
